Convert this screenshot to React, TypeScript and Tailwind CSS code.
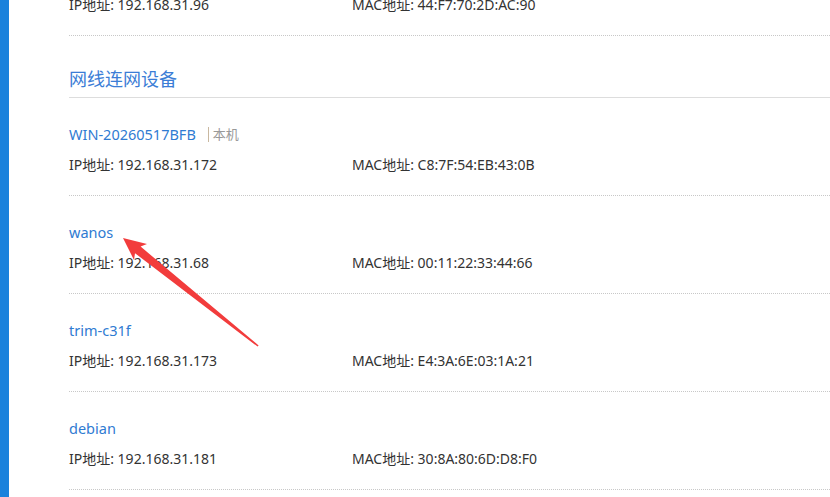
import React from "react";

type Device = { name: string; ip: string; mac: string; self?: boolean };

const devices: Device[] = [
  { name: "WIN-20260517BFB", ip: "192.168.31.172", mac: "C8:7F:54:EB:43:0B", self: true },
  { name: "wanos", ip: "192.168.31.68", mac: "00:11:22:33:44:66" },
  { name: "trim-c31f", ip: "192.168.31.173", mac: "E4:3A:6E:03:1A:21" },
  { name: "debian", ip: "192.168.31.181", mac: "30:8A:80:6D:D8:F0" },
];

function InfoLine({ ip, mac }: { ip: string; mac: string }) {
  return (
    <div className="flex h-[20px] items-center text-[14px] leading-[20px] text-[#333]">
      <div className="w-[283px] shrink-0 whitespace-nowrap">IP地址: {ip}</div>
      <div className="whitespace-nowrap">MAC地址: {mac}</div>
    </div>
  );
}

export default function App() {
  return (
    <div
      className="relative flex h-[497px] w-[830px] overflow-hidden bg-white"
      style={{ fontFamily: '"Noto Sans", "Noto Sans CJK SC", sans-serif' }}
    >
      <div className="w-[9px] shrink-0 bg-[#1a82dc]" />
      <div className="flex-1 pl-[60px]">
        <div className="-mt-[5px] border-b border-dotted border-[#c8c8c8] pb-[20px]">
          <InfoLine ip="192.168.31.96" mac="44:F7:70:2D:AC:90" />
        </div>
        <div
          className="mt-[30px] border-b border-[#dddddd] pb-[7px] text-[18px] leading-[24px] text-[#3b7dd6]"
          style={{ fontFamily: '"Noto Sans CJK SC", sans-serif' }}
        >
          网线连网设备
        </div>
        {devices.map((d) => (
          <div key={d.name} className="border-b border-dotted border-[#c8c8c8] pt-[26px] pb-[20px]">
            <div className="flex h-[20px] items-center text-[14.5px] leading-[20px]">
              <span className="text-[#2f7bd2]">{d.name}</span>
              {d.self && (
                <span className="ml-[12px] flex items-center text-[13px] text-[#999]">
                  <span className="mr-[4px] inline-block h-[15px] w-[1px] bg-[#c9b8a0]" />
                  本机
                </span>
              )}
            </div>
            <div className="mt-[11px]">
              <InfoLine ip={d.ip} mac={d.mac} />
            </div>
          </div>
        ))}
      </div>
      <svg className="pointer-events-none absolute left-0 top-0" width="830" height="497" viewBox="0 0 830 497">
        <polygon
          points="123,238 147,244 140.6,246.6 258.6,345.4 257.6,346.6 135,253.2 134,260"
          fill="#f23c3c"
        />
      </svg>
    </div>
  );
}
